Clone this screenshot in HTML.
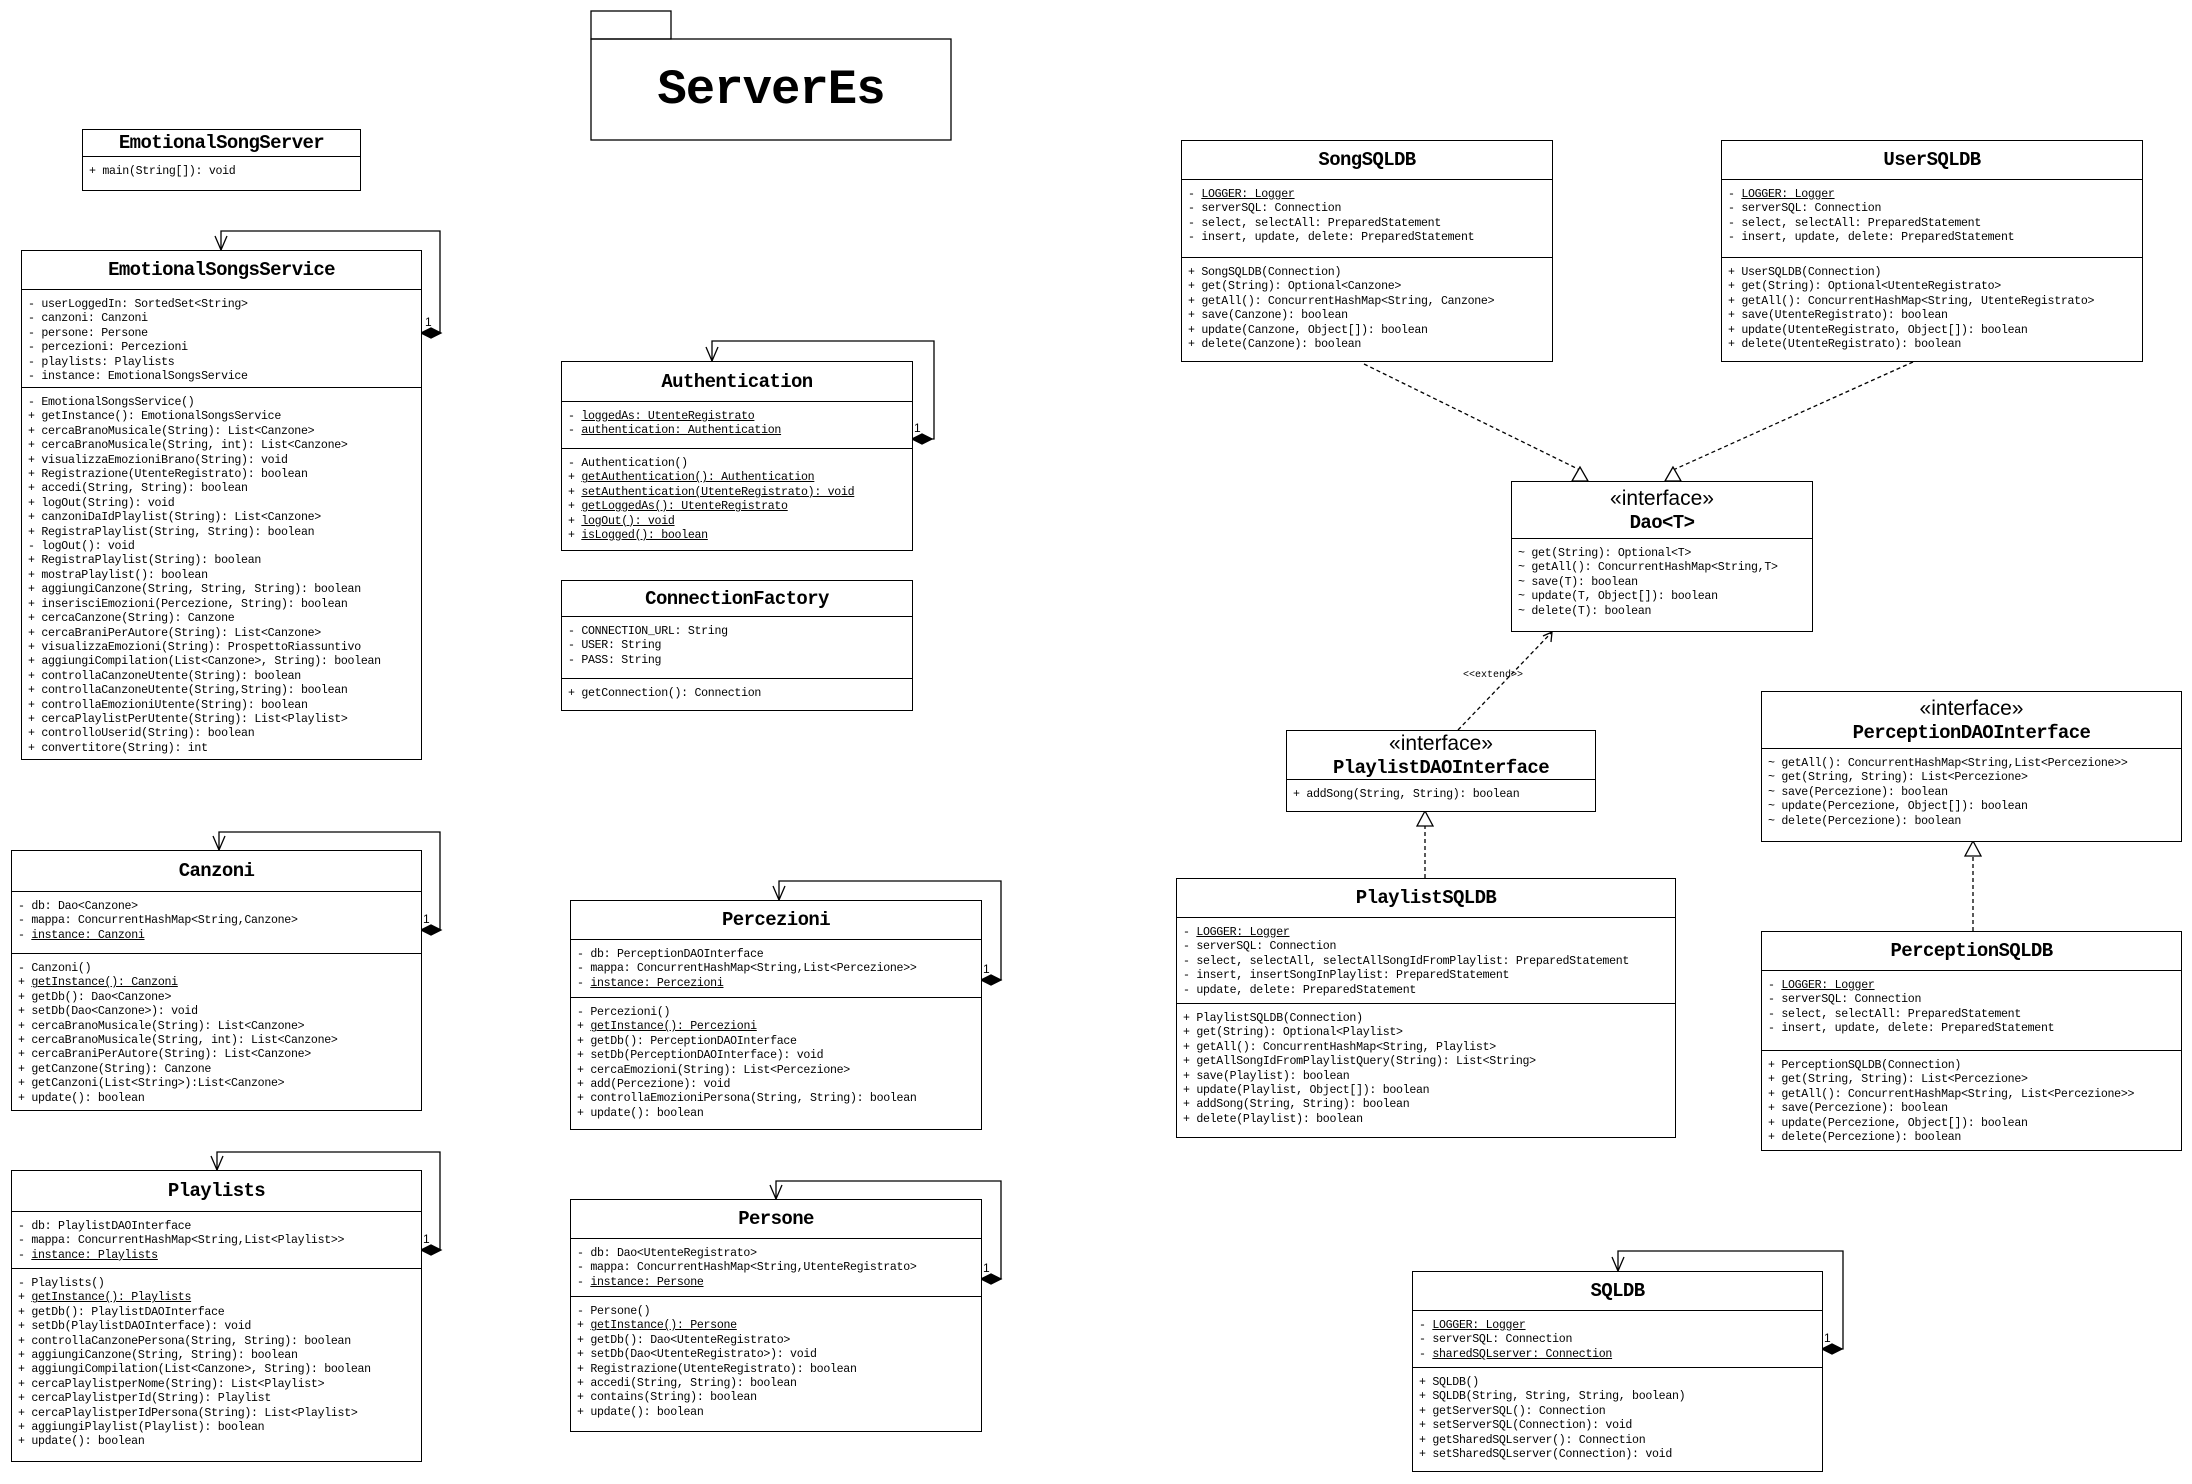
<!DOCTYPE html>
<html><head><meta charset="utf-8"><style>
body{margin:0;width:2192px;height:1484px;background:#fff;position:relative;overflow:hidden;font-family:"Liberation Mono",monospace;color:#000}
.b{position:absolute;border:1.5px solid #000;box-sizing:border-box;background:#fff}
.h{border-bottom:1.5px solid #000;box-sizing:border-box;display:flex;flex-direction:column;justify-content:center;align-items:center;font-weight:bold;font-size:19px;letter-spacing:-0.6px}
.s{border-bottom:1.5px solid #000;box-sizing:border-box;padding:8px 0 0 6px;font-size:11.6px;line-height:14.4px;white-space:pre;letter-spacing:-0.3px}
.s:last-child{border-bottom:none}
.st{font-family:"Liberation Sans",sans-serif;font-weight:normal;font-size:21px;letter-spacing:0;line-height:26px}
u{text-decoration:underline}
svg{position:absolute;left:0;top:0}
</style></head><body>
<svg width="2192" height="1484" fill="none" stroke="#000" stroke-width="1.3">
<rect x="591" y="11" width="80" height="28"/>
<rect x="591" y="39" width="360" height="101"/>
<g>
<polyline points="221,250 221,231 440,231 440,333 421,333"/>
<polyline points="215,236 221,250 227,236"/>
<polygon points="421,333 431,328 441,333 431,338" fill="#000"/>
<polyline points="712,361 712,341 934,341 934,439 912,439"/>
<polyline points="706,347 712,361 718,347"/>
<polygon points="912,439 922,434 932,439 922,444" fill="#000"/>
<polyline points="219,850 219,832 440,832 440,930 421,930"/>
<polyline points="213,836 219,850 225,836"/>
<polygon points="421,930 431,925 441,930 431,935" fill="#000"/>
<polyline points="217,1170 217,1152 440,1152 440,1250 421,1250"/>
<polyline points="211,1156 217,1170 223,1156"/>
<polygon points="421,1250 431,1245 441,1250 431,1255" fill="#000"/>
<polyline points="779,900 779,881 1001,881 1001,980 981,980"/>
<polyline points="773,886 779,900 785,886"/>
<polygon points="981,980 991,975 1001,980 991,985" fill="#000"/>
<polyline points="776,1199 776,1181 1001,1181 1001,1279 981,1279"/>
<polyline points="770,1185 776,1199 782,1185"/>
<polygon points="981,1279 991,1274 1001,1279 991,1284" fill="#000"/>
<polyline points="1618,1271 1618,1251 1843,1251 1843,1349 1822,1349"/>
<polyline points="1612,1257 1618,1271 1624,1257"/>
<polygon points="1822,1349 1832,1344 1842,1349 1832,1354" fill="#000"/>
</g>
<g stroke-dasharray="4,3">
<line x1="1364" y1="364" x2="1580" y2="470"/>
<line x1="1913" y1="362" x2="1673" y2="470"/>
<line x1="1458" y1="730" x2="1552" y2="632"/>
<line x1="1425" y1="878" x2="1425" y2="826"/>
<line x1="1973" y1="931" x2="1973" y2="856"/>
</g>
<polygon points="1580,467 1572,481 1588,481" fill="#fff"/>
<polygon points="1673,467 1665,481 1681,481" fill="#fff"/>
<polyline points="1543,636 1552,632 1551,642"/>
<polygon points="1425,811 1417,826 1433,826" fill="#fff"/>
<polygon points="1973,841 1965,856 1981,856" fill="#fff"/>
<g fill="#000" stroke="none" font-family="Liberation Sans,sans-serif" font-size="12">
<text x="425" y="326">1</text><text x="914" y="432">1</text><text x="423" y="923">1</text><text x="423" y="1243">1</text><text x="983" y="973">1</text><text x="983" y="1272">1</text><text x="1824" y="1342">1</text>
<text x="1463" y="677" font-family="Liberation Mono,monospace" font-size="10">&lt;&lt;extend&gt;&gt;</text>
</g>
</svg>
<div style="position:absolute;left:591px;top:39px;width:360px;height:101px;display:flex;align-items:center;justify-content:center;font-weight:bold;font-size:49px;letter-spacing:-1px">ServerEs</div>

<div class="b" style="left:82px;top:129px;width:279px;height:62px"><div class="h" style="height:27px">EmotionalSongServer</div><div class="s">+ main(String[]): void</div></div>

<div class="b" style="left:21px;top:250px;width:401px;height:510px"><div class="h" style="height:39px">EmotionalSongsService</div><div class="s" style="height:98px">- userLoggedIn: SortedSet&lt;String&gt;
- canzoni: Canzoni
- persone: Persone
- percezioni: Percezioni
- playlists: Playlists
- instance: EmotionalSongsService</div><div class="s">- EmotionalSongsService()
+ getInstance(): EmotionalSongsService
+ cercaBranoMusicale(String): List&lt;Canzone&gt;
+ cercaBranoMusicale(String, int): List&lt;Canzone&gt;
+ visualizzaEmozioniBrano(String): void
+ Registrazione(UtenteRegistrato): boolean
+ accedi(String, String): boolean
+ logOut(String): void
+ canzoniDaIdPlaylist(String): List&lt;Canzone&gt;
+ RegistraPlaylist(String, String): boolean
- logOut(): void
+ RegistraPlaylist(String): boolean
+ mostraPlaylist(): boolean
+ aggiungiCanzone(String, String, String): boolean
+ inserisciEmozioni(Percezione, String): boolean
+ cercaCanzone(String): Canzone
+ cercaBraniPerAutore(String): List&lt;Canzone&gt;
+ visualizzaEmozioni(String): ProspettoRiassuntivo
+ aggiungiCompilation(List&lt;Canzone&gt;, String): boolean
+ controllaCanzoneUtente(String): boolean
+ controllaCanzoneUtente(String,String): boolean
+ controllaEmozioniUtente(String): boolean
+ cercaPlaylistPerUtente(String): List&lt;Playlist&gt;
+ controlloUserid(String): boolean
+ convertitore(String): int</div></div>

<div class="b" style="left:561px;top:361px;width:352px;height:190px"><div class="h" style="height:40px">Authentication</div><div class="s" style="height:47px">- <u>loggedAs: UtenteRegistrato</u>
- <u>authentication: Authentication</u></div><div class="s">- Authentication()
+ <u>getAuthentication(): Authentication</u>
+ <u>setAuthentication(UtenteRegistrato): void</u>
+ <u>getLoggedAs(): UtenteRegistrato</u>
+ <u>logOut(): void</u>
+ <u>isLogged(): boolean</u></div></div>

<div class="b" style="left:561px;top:580px;width:352px;height:131px"><div class="h" style="height:36px">ConnectionFactory</div><div class="s" style="height:62px">- CONNECTION_URL: String
- USER: String
- PASS: String</div><div class="s">+ getConnection(): Connection</div></div>

<div class="b" style="left:11px;top:850px;width:411px;height:261px"><div class="h" style="height:41px">Canzoni</div><div class="s" style="height:62px">- db: Dao&lt;Canzone&gt;
- mappa: ConcurrentHashMap&lt;String,Canzone&gt;
- <u>instance: Canzoni</u></div><div class="s">- Canzoni()
+ <u>getInstance(): Canzoni</u>
+ getDb(): Dao&lt;Canzone&gt;
+ setDb(Dao&lt;Canzone&gt;): void
+ cercaBranoMusicale(String): List&lt;Canzone&gt;
+ cercaBranoMusicale(String, int): List&lt;Canzone&gt;
+ cercaBraniPerAutore(String): List&lt;Canzone&gt;
+ getCanzone(String): Canzone
+ getCanzoni(List&lt;String&gt;):List&lt;Canzone&gt;
+ update(): boolean</div></div>

<div class="b" style="left:11px;top:1170px;width:411px;height:292px"><div class="h" style="height:41px">Playlists</div><div class="s" style="height:57px">- db: PlaylistDAOInterface
- mappa: ConcurrentHashMap&lt;String,List&lt;Playlist&gt;&gt;
- <u>instance: Playlists</u></div><div class="s">- Playlists()
+ <u>getInstance(): Playlists</u>
+ getDb(): PlaylistDAOInterface
+ setDb(PlaylistDAOInterface): void
+ controllaCanzonePersona(String, String): boolean
+ aggiungiCanzone(String, String): boolean
+ aggiungiCompilation(List&lt;Canzone&gt;, String): boolean
+ cercaPlaylistperNome(String): List&lt;Playlist&gt;
+ cercaPlaylistperId(String): Playlist
+ cercaPlaylistperIdPersona(String): List&lt;Playlist&gt;
+ aggiungiPlaylist(Playlist): boolean
+ update(): boolean</div></div>

<div class="b" style="left:570px;top:900px;width:412px;height:230px"><div class="h" style="height:39px">Percezioni</div><div class="s" style="height:58px">- db: PerceptionDAOInterface
- mappa: ConcurrentHashMap&lt;String,List&lt;Percezione&gt;&gt;
- <u>instance: Percezioni</u></div><div class="s">- Percezioni()
+ <u>getInstance(): Percezioni</u>
+ getDb(): PerceptionDAOInterface
+ setDb(PerceptionDAOInterface): void
+ cercaEmozioni(String): List&lt;Percezione&gt;
+ add(Percezione): void
+ controllaEmozioniPersona(String, String): boolean
+ update(): boolean</div></div>

<div class="b" style="left:570px;top:1199px;width:412px;height:233px"><div class="h" style="height:39px">Persone</div><div class="s" style="height:58px">- db: Dao&lt;UtenteRegistrato&gt;
- mappa: ConcurrentHashMap&lt;String,UtenteRegistrato&gt;
- <u>instance: Persone</u></div><div class="s">- Persone()
+ <u>getInstance(): Persone</u>
+ getDb(): Dao&lt;UtenteRegistrato&gt;
+ setDb(Dao&lt;UtenteRegistrato&gt;): void
+ Registrazione(UtenteRegistrato): boolean
+ accedi(String, String): boolean
+ contains(String): boolean
+ update(): boolean</div></div>

<div class="b" style="left:1181px;top:140px;width:372px;height:222px"><div class="h" style="height:39px">SongSQLDB</div><div class="s" style="height:78px">- <u>LOGGER: Logger</u>
- serverSQL: Connection
- select, selectAll: PreparedStatement
- insert, update, delete: PreparedStatement</div><div class="s">+ SongSQLDB(Connection)
+ get(String): Optional&lt;Canzone&gt;
+ getAll(): ConcurrentHashMap&lt;String, Canzone&gt;
+ save(Canzone): boolean
+ update(Canzone, Object[]): boolean
+ delete(Canzone): boolean</div></div>

<div class="b" style="left:1721px;top:140px;width:422px;height:222px"><div class="h" style="height:39px">UserSQLDB</div><div class="s" style="height:78px">- <u>LOGGER: Logger</u>
- serverSQL: Connection
- select, selectAll: PreparedStatement
- insert, update, delete: PreparedStatement</div><div class="s">+ UserSQLDB(Connection)
+ get(String): Optional&lt;UtenteRegistrato&gt;
+ getAll(): ConcurrentHashMap&lt;String, UtenteRegistrato&gt;
+ save(UtenteRegistrato): boolean
+ update(UtenteRegistrato, Object[]): boolean
+ delete(UtenteRegistrato): boolean</div></div>

<div class="b" style="left:1511px;top:481px;width:302px;height:151px"><div class="h" style="height:57px"><span class="st">«interface»</span><span>Dao&lt;T&gt;</span></div><div class="s">~ get(String): Optional&lt;T&gt;
~ getAll(): ConcurrentHashMap&lt;String,T&gt;
~ save(T): boolean
~ update(T, Object[]): boolean
~ delete(T): boolean</div></div>

<div class="b" style="left:1286px;top:730px;width:310px;height:82px"><div class="h" style="height:49px"><span class="st">«interface»</span><span>PlaylistDAOInterface</span></div><div class="s">+ addSong(String, String): boolean</div></div>

<div class="b" style="left:1761px;top:691px;width:421px;height:151px"><div class="h" style="height:57px"><span class="st">«interface»</span><span>PerceptionDAOInterface</span></div><div class="s">~ getAll(): ConcurrentHashMap&lt;String,List&lt;Percezione&gt;&gt;
~ get(String, String): List&lt;Percezione&gt;
~ save(Percezione): boolean
~ update(Percezione, Object[]): boolean
~ delete(Percezione): boolean</div></div>

<div class="b" style="left:1176px;top:878px;width:500px;height:260px"><div class="h" style="height:39px">PlaylistSQLDB</div><div class="s" style="height:86px">- <u>LOGGER: Logger</u>
- serverSQL: Connection
- select, selectAll, selectAllSongIdFromPlaylist: PreparedStatement
- insert, insertSongInPlaylist: PreparedStatement
- update, delete: PreparedStatement</div><div class="s">+ PlaylistSQLDB(Connection)
+ get(String): Optional&lt;Playlist&gt;
+ getAll(): ConcurrentHashMap&lt;String, Playlist&gt;
+ getAllSongIdFromPlaylistQuery(String): List&lt;String&gt;
+ save(Playlist): boolean
+ update(Playlist, Object[]): boolean
+ addSong(String, String): boolean
+ delete(Playlist): boolean</div></div>

<div class="b" style="left:1761px;top:931px;width:421px;height:220px"><div class="h" style="height:39px">PerceptionSQLDB</div><div class="s" style="height:80px">- <u>LOGGER: Logger</u>
- serverSQL: Connection
- select, selectAll: PreparedStatement
- insert, update, delete: PreparedStatement</div><div class="s">+ PerceptionSQLDB(Connection)
+ get(String, String): List&lt;Percezione&gt;
+ getAll(): ConcurrentHashMap&lt;String, List&lt;Percezione&gt;&gt;
+ save(Percezione): boolean
+ update(Percezione, Object[]): boolean
+ delete(Percezione): boolean</div></div>

<div class="b" style="left:1412px;top:1271px;width:411px;height:201px"><div class="h" style="height:39px">SQLDB</div><div class="s" style="height:57px">- <u>LOGGER: Logger</u>
- serverSQL: Connection
- <u>sharedSQLserver: Connection</u></div><div class="s">+ SQLDB()
+ SQLDB(String, String, String, boolean)
+ getServerSQL(): Connection
+ setServerSQL(Connection): void
+ getSharedSQLserver(): Connection
+ setSharedSQLserver(Connection): void</div></div>
</body></html>
